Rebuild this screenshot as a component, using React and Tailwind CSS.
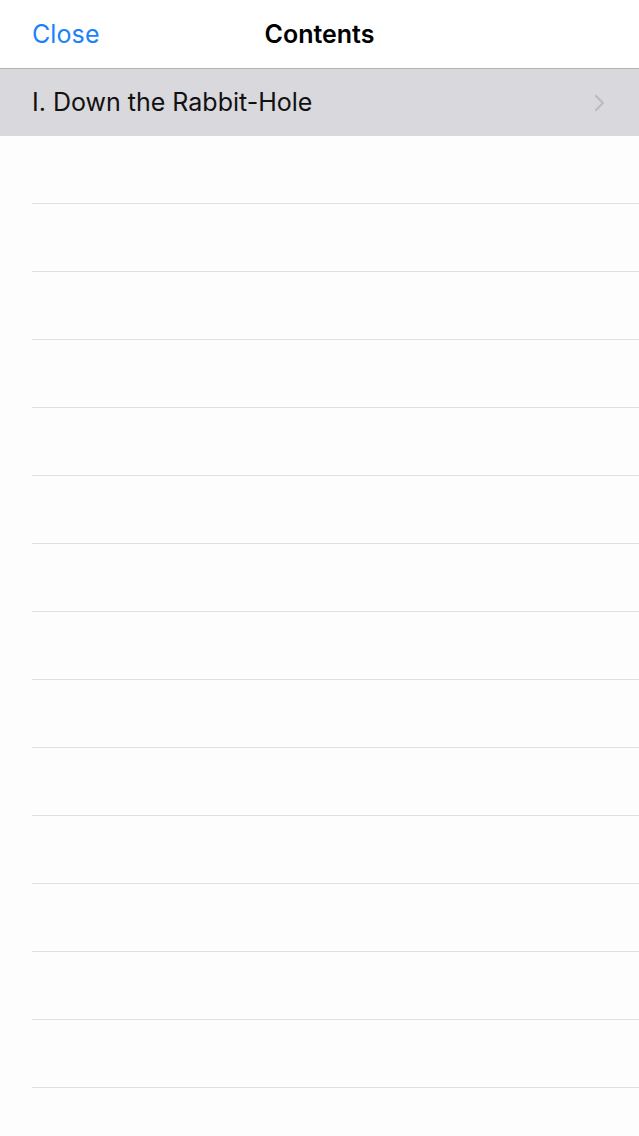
export default function App() {
  const rows = Array.from({ length: 15 });
  return (
    <div className="w-[639px] h-[1136px] overflow-hidden bg-[#fdfdfd]" style={{ fontFamily: '"Inter", "Liberation Sans", sans-serif' }}>
      <div className="relative h-[69px] bg-white border-b border-[#b5b5b8] flex items-center">
        <span className="pl-[32px] text-[25px] text-[#1a82fb] pt-px tracking-[0.1px]">Close</span>
        <span className="absolute left-0 right-0 text-center text-[25px] font-semibold text-black pointer-events-none pt-px">Contents</span>
      </div>
      <div className="h-[67px] bg-[#d9d8dc] flex items-center justify-between pl-[32px] pr-[32px]">
        <span className="text-[25px] text-[#111]">I. Down the Rabbit-Hole</span>
        <svg width="12" height="18" viewBox="0 0 12 18" className="mr-[1px]">
          <path d="M2 2 L9 9 L2 16" fill="none" stroke="#bcbbc0" strokeWidth="2.2" strokeLinecap="round" strokeLinejoin="round" />
        </svg>
      </div>
      {rows.map((_, i) => (
        <div key={i} className="pl-[32px]">
          <div className="h-[68px] border-b border-[#e0e0e3]" />
        </div>
      ))}
    </div>
  );
}
